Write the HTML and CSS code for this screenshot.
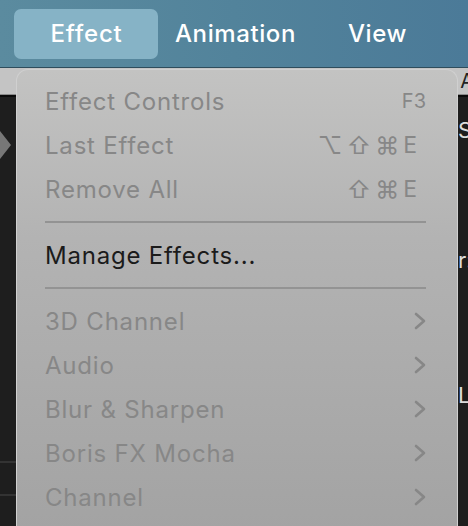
FILE: index.html
```html
<!DOCTYPE html>
<html>
<head>
<meta charset="utf-8">
<link rel="stylesheet" href="styles.css">
</head>
<body>
<div class="screen">
  <header class="menubar">
    <div class="mb-item active">Effect</div>
    <div class="mb-item anim">Animation</div>
    <div class="mb-item">View</div>
  </header>
  <div class="workspace">
    <div class="panel-head"><span class="ph-text">A</span></div>
    <div class="panel-body">
      <div class="left-col">
        <div class="tri"></div>
        <div class="left-rule r1"></div>
        <div class="left-rule r2"></div>
      </div>
      <div class="right-col">
        <span class="rc-s">S</span>
        <span class="rc-r">r:</span>
        <span class="rc-l">L</span>
      </div>
    </div>
  </div>

  <nav class="menu">
    <div class="item disabled"><span class="label">Effect Controls</span><span class="sc small">F3</span></div>
    <div class="item disabled"><span class="label">Last Effect</span><span class="sc"><span class="sym">⌥</span><span class="sym">⇧</span><span class="sym">⌘</span><span>E</span></span></div>
    <div class="item disabled"><span class="label">Remove All</span><span class="sc"><span class="sym">⇧</span><span class="sym">⌘</span><span>E</span></span></div>
    <div class="sep"></div>
    <div class="item"><span class="label">Manage Effects...</span></div>
    <div class="sep"></div>
    <div class="item disabled"><span class="label">3D Channel</span><svg class="chev" viewBox="0 0 12 18"><path d="M2 2 L10 9 L2 16" /></svg></div>
    <div class="item disabled"><span class="label">Audio</span><svg class="chev" viewBox="0 0 12 18"><path d="M2 2 L10 9 L2 16" /></svg></div>
    <div class="item disabled"><span class="label">Blur &amp; Sharpen</span><svg class="chev" viewBox="0 0 12 18"><path d="M2 2 L10 9 L2 16" /></svg></div>
    <div class="item disabled"><span class="label">Boris FX Mocha</span><svg class="chev" viewBox="0 0 12 18"><path d="M2 2 L10 9 L2 16" /></svg></div>
    <div class="item disabled"><span class="label">Channel</span><svg class="chev" viewBox="0 0 12 18"><path d="M2 2 L10 9 L2 16" /></svg></div>
  </nav>
</div>
</body>
</html>
```

FILE: styles.css
```css
* { box-sizing: border-box; margin: 0; padding: 0; }
html, body { width: 468px; height: 526px; overflow: hidden; }
body { font-family: Inter, "Noto Sans", "Liberation Sans", sans-serif; background: #1c1c1c; }

.screen { position: relative; width: 468px; height: 526px; display: flex; flex-direction: column; overflow: hidden; }

.menubar {
  height: 68px;
  flex: none;
  display: flex;
  align-items: center;
  padding-left: 14px;
  background: linear-gradient(90deg, #5b8b9f 0%, #52839b 50%, #4b7a98 100%);
  border-bottom: 1px solid #2f4d5c;
}
.mb-item {
  color: #fff;
  font-size: 24px;
  font-weight: 500;
  letter-spacing: 0.6px;
  height: 50px;
  display: flex;
  align-items: center;
  border-radius: 7px;
}
.mb-item.active { background: #86b3c6; width: 144px; justify-content: center; padding-left: 1px; letter-spacing: 0.8px; }
.mb-item.anim { margin-left: 17px; margin-right: 52px; }

.workspace { flex: 1; display: flex; flex-direction: column; }
.panel-head {
  height: 27px;
  background: #c4c4c4;
  border-bottom: 1px solid #8a8a8a;
  display: flex;
  justify-content: flex-end;
  align-items: center;
}
.ph-text { font-size: 20px; color: #222; margin-right: -6px; }
.panel-body { flex: 1; display: flex; justify-content: space-between; background: #1e1e1e; border-top: 2px solid #0a0a0a; }
.left-col { width: 16px; position: relative; }
.tri {
  position: absolute; left: 0; top: 34px;
  width: 0; height: 0;
  border-top: 14px solid transparent;
  border-bottom: 14px solid transparent;
  border-left: 11px solid #777;
}
.left-rule { position: absolute; left: 0; width: 16px; height: 2px; background: #333; }
.r1 { top: 364px; }
.r2 { top: 397px; }
.right-col { width: 10px; position: relative; color: #ddd; font-size: 22px; }
.right-col span { position: absolute; left: 0; }
.rc-s { top: 20px; }
.rc-r { top: 150px; }
.rc-l { top: 285px; }

.menu {
  position: absolute;
  left: 16px;
  top: 69px;
  width: 442px;
  height: 480px;
  border-radius: 12px 12px 0 0;
  background: linear-gradient(180deg, #c3c3c2 0%, #b3b3b3 35%, #a2a2a2 100%);
  border: 1px solid #d0d0d0;
  border-bottom: none;
  padding: 9px 31px 0 28px;
  display: flex;
  flex-direction: column;
}
.item {
  height: 44px;
  display: flex;
  align-items: center;
  justify-content: space-between;
  font-size: 24px;
  letter-spacing: 0.8px;
  color: #1b1b1b;
}
.item.disabled { color: #878787; }
.sc { font-size: 23px; display: flex; align-items: center; gap: 4px; margin-right: 9px; letter-spacing: 0; }
.sc span { display: inline-block; }
.sc .sym { font-size: 24px; }
.sc.small { font-size: 20px; margin-right: 0; }
.chev { width: 12px; height: 18px; fill: none; stroke: #878787; stroke-width: 2.6; stroke-linecap: round; stroke-linejoin: round; margin-right: 0; }
.sep { height: 2px; background: #939393; margin: 10px 0 10px 0; }
```
